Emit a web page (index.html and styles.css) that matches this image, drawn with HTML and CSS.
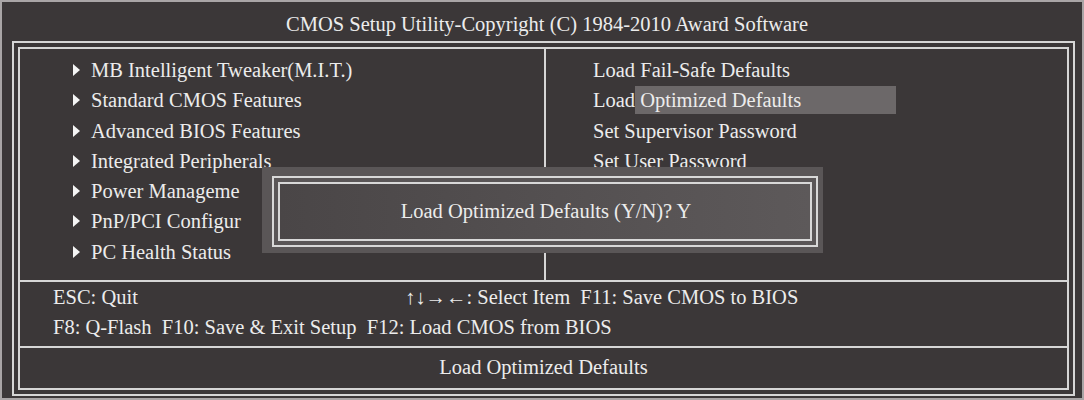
FILE: index.html
```html
<!DOCTYPE html>
<html lang="en">
<head>
  <meta charset="UTF-8" />
  <meta name="viewport" content="width=device-width, initial-scale=1" />
  <title>CMOS Setup Utility</title>
  <link rel="stylesheet" href="styles.css">
</head>
<body>
  <div class="screen">
    <div class="title">CMOS Setup Utility-Copyright (C) 1984-2010 Award Software</div>
    <div class="frame">
      <div class="frame-inner">
        <div class="menu">
          <ul class="menu-col left">
            <li><span class="arrow"></span>MB Intelligent Tweaker(M.I.T.)</li>
            <li><span class="arrow"></span>Standard CMOS Features</li>
            <li><span class="arrow"></span>Advanced BIOS Features</li>
            <li><span class="arrow"></span>Integrated Peripherals</li>
            <li><span class="arrow"></span>Power Manageme</li>
            <li><span class="arrow"></span>PnP/PCI Configur</li>
            <li><span class="arrow"></span>PC Health Status</li>
          </ul>
          <ul class="menu-col right">
            <li>Load Fail-Safe Defaults</li>
            <li>Load<span class="selected">Optimized Defaults</span></li>
            <li>Set Supervisor Password</li>
            <li>Set User Password</li>
          </ul>
          <div class="dialog">
            <div class="dialog-line">
              <div class="dialog-body">Load Optimized Defaults (Y/N)? Y</div>
            </div>
          </div>
        </div>
        <div class="help">
          <div class="help-row">
            <span>ESC: Quit</span>
            <span><span class="keys">&uarr;&darr;&rarr;&larr;</span>: Select Item&nbsp; F11: Save CMOS to BIOS</span>
          </div>
          <div class="help-row single">
            <span>F8: Q-Flash&nbsp; F10: Save &amp; Exit Setup&nbsp; F12: Load CMOS from BIOS</span>
          </div>
        </div>
        <div class="status">Load Optimized Defaults</div>
      </div>
    </div>
  </div>
</body>
</html>
```

FILE: styles.css
```css
*, *::before, *::after {
  box-sizing: border-box;
}
body {
  margin: 0;
  background: #3b3738;
  font-family: 'Liberation Serif', 'Times New Roman', serif;
  font-size: 20.5px;
  color: #ececec;
}
.screen {
  width: 1084px;
  height: 400px;
  border: 2px solid #a9a5a6;
  background: #3b3738;
  display: flex;
  flex-direction: column;
  overflow: hidden;
}
.title {
  height: 39px;
  line-height: 45px;
  text-align: center;
  padding-left: 10px;
}
.frame {
  flex: 1;
  margin: 0 7px 2px 10px;
  border: 2px solid #d6d6d6;
  padding: 4px;
  display: flex;
}
.frame-inner {
  flex: 1;
  border: 2px solid #d6d6d6;
  display: flex;
  flex-direction: column;
}
.menu {
  position: relative;
  height: 233px;
  display: flex;
  border-bottom: 2px solid #d6d6d6;
}
.menu-col {
  list-style: none;
  margin: 0;
  padding: 6px 0 0;
}
.menu-col li {
  height: 30.3px;
  line-height: 30px;
  white-space: nowrap;
}
.left {
  width: 526px;
  padding-left: 53px;
  border-right: 2px solid #d6d6d6;
}
.right {
  flex: 1;
  padding-left: 47px;
}
.arrow {
  display: inline-block;
  width: 0;
  height: 0;
  border-left: 7px solid #f4f4f4;
  border-top: 6px solid transparent;
  border-bottom: 6px solid transparent;
  margin-right: 11px;
  vertical-align: 1px;
}
.selected {
  display: inline-block;
  width: 261px;
  line-height: 28px;
  padding-left: 5px;
  background: #6c6869;
}
.dialog {
  position: absolute;
  left: 242px;
  top: 118px;
  width: 561px;
  height: 86px;
  background: #5a5657;
  padding: 9px 5px 6px 10px;
  display: flex;
}
.dialog-line {
  flex: 1;
  border: 2px solid #d8d8d8;
  padding: 4px;
  display: flex;
}
.dialog-body {
  flex: 1;
  border: 2px solid #d8d8d8;
  background: linear-gradient(to right, #4a4647, #5d595a);
  display: flex;
  align-items: center;
  justify-content: center;
  padding-left: 2px;
}
.help {
  height: 66px;
  padding-left: 33px;
  border-bottom: 2px solid #d6d6d6;
}
.help-row {
  display: grid;
  grid-template-columns: 352px auto;
  line-height: 30px;
  white-space: nowrap;
}
.help-row.single {
  display: block;
}
.keys {
  font-family: 'Liberation Sans', sans-serif;
}
.status {
  flex: 1;
  text-align: center;
  line-height: 38px;
}
```
